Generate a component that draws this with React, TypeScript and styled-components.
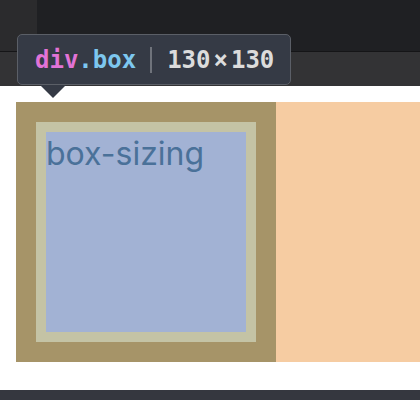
import React from 'react'
import styled, { createGlobalStyle } from 'styled-components'

const GlobalStyle = createGlobalStyle`
  html, body {
    margin: 0;
    padding: 0;
    width: 420px;
    height: 400px;
    overflow: hidden;
    background: #ffffff;
  }
`

const Frame = styled.div`
  position: relative;
  display: flex;
  flex-direction: column;
  width: 420px;
  height: 400px;
`

const Toolbar = styled.div`
  display: flex;
  height: 52px;
  background-color: #1f2023;
  border-bottom: 1px solid #151517;
  box-sizing: border-box;
`

const SideTab = styled.div`
  width: 37px;
  background-color: #2b2b2d;
`

const TabBand = styled.div`
  height: 34px;
  background-color: #333335;
`

const Viewport = styled.div`
  display: flex;
  flex: 1;
  padding: 16px 0 28px 16px;
  background-color: #ffffff;
`

const MarginArea = styled.div`
  display: flex;
  flex: 1;
  background-color: #f6cca2;
`

const BorderBox = styled.div`
  width: 260px;
  height: 260px;
  padding: 20px;
  box-sizing: border-box;
  background-color: #a69468;
`

const PaddingBox = styled.div`
  width: 220px;
  height: 220px;
  padding: 10px;
  box-sizing: border-box;
  background-color: #c4c3a5;
`

const ContentBox = styled.div`
  width: 200px;
  height: 200px;
  background-color: #a2b2d4;
  color: #4a7199;
  font-family: Inter, 'Noto Sans', sans-serif;
  font-size: 32px;
  line-height: 43px;
`

const BottomBar = styled.div`
  height: 10px;
  background-color: #35373f;
`

const Tooltip = styled.div`
  position: absolute;
  left: 17px;
  top: 34px;
  height: 51px;
  display: flex;
  align-items: center;
  padding: 0 16px 0 17px;
  box-sizing: border-box;
  background-color: #353a45;
  border: 1px solid #5b5f67;
  border-radius: 5px;
  font-family: 'DejaVu Sans Mono', 'Liberation Mono', monospace;
  font-weight: bold;
  font-size: 24px;

  &::after {
    content: '';
    position: absolute;
    left: 22px;
    bottom: -14px;
    border-left: 13px solid transparent;
    border-right: 13px solid transparent;
    border-top: 13px solid #353a45;
  }
`

const Tag = styled.span<{ $tone: string }>`
  color: ${({ $tone }) => $tone};
`

const Divider = styled.span`
  width: 2px;
  height: 26px;
  margin: 0 15px 0 14px;
  background-color: #6f737b;
`

const Times = styled.span`
  margin: 0 3px;
`

export default function App() {
  return (
    <Frame>
      <GlobalStyle />
      <Toolbar>
        <SideTab />
      </Toolbar>
      <TabBand />
      <Viewport>
        <MarginArea>
          <BorderBox>
            <PaddingBox>
              <ContentBox>box-sizing</ContentBox>
            </PaddingBox>
          </BorderBox>
        </MarginArea>
      </Viewport>
      <BottomBar />
      <Tooltip>
        <Tag $tone="#e273d6">div</Tag>
        <Tag $tone="#7dc7ef">.box</Tag>
        <Divider />
        <Tag $tone="#dcdcdc">
          130<Times>×</Times>130
        </Tag>
      </Tooltip>
    </Frame>
  )
}
